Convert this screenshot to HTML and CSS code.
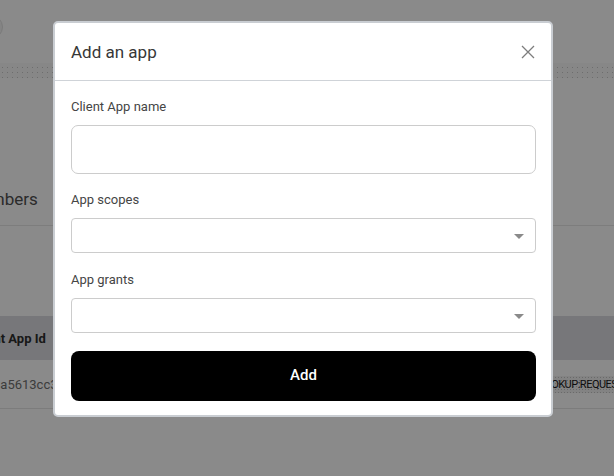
FILE: index.html
```html
<!DOCTYPE html>
<html>
<head>
<meta charset="utf-8">
<link rel="stylesheet" href="styles.css">
</head>
<body>
<div class="page">
  <div class="topbar"><span class="avatar"></span></div>
  <div class="dots"></div>
  <div class="tabs"><span class="tab">Members</span></div>
  <div class="table">
    <div class="thead"><span class="th">Client App Id</span></div>
    <div class="trow"><span class="td">3a5613cc3b1</span><span class="td-right">LOOKUP:REQUEST</span></div>
  </div>
</div>
<div class="overlay"></div>
<div class="modal">
  <div class="modal-header">
    <h2 class="modal-title">Add an app</h2>
    <svg class="close" width="14" height="14" viewBox="0 0 14 14"><path d="M1 1 L13 13 M13 1 L1 13" stroke="#7d7d7d" stroke-width="1.3" fill="none"/></svg>
  </div>
  <div class="modal-body">
    <div class="field">
      <div class="label">Client App name</div>
      <div class="input"></div>
    </div>
    <div class="field">
      <div class="label">App scopes</div>
      <div class="select"><span class="caret"></span></div>
    </div>
    <div class="field">
      <div class="label">App grants</div>
      <div class="select"><span class="caret"></span></div>
    </div>
    <button class="btn">Add</button>
  </div>
</div>
</body>
</html>
```
FILE: styles.css
```css
* { box-sizing: border-box; }
html, body { margin: 0; padding: 0; }
body {
  width: 614px;
  height: 476px;
  overflow: hidden;
  background: #ffffff;
  font-family: Roboto, "Liberation Sans", Arial, sans-serif;
}
.page {
  width: 614px;
  height: 476px;
  overflow: hidden;
}
.topbar {
  height: 63px;
  padding-top: 15px;
}
.avatar {
  display: block;
  width: 24px;
  height: 24px;
  margin-left: -21px;
  border-radius: 50%;
  background: #f4f4f4;
  border: 1px solid #e2e2e2;
}
.dots {
  height: 15px;
  background-color: #fafafa;
  background-image: radial-gradient(circle, #c9c9c9 0.7px, transparent 1px);
  background-size: 5px 5px;
  background-position: 0 2px;
}
.tabs {
  height: 148px;
  border-bottom: 1px solid #e8e8e8;
  padding-top: 111px;
  margin-left: -34px;
}
.tab {
  font-size: 17px;
  line-height: 20px;
  color: #505050;
}
.table { margin-top: 90px; }
.thead {
  height: 44px;
  background: #dcdce1;
  display: flex;
  align-items: center;
  margin-left: -29px;
}
.th {
  font-size: 13px;
  font-weight: 700;
  color: #2e2e2e;
}
.trow {
  height: 49px;
  border-bottom: 1px solid #e6e6e6;
  display: flex;
  align-items: center;
  margin-left: -7px;
  white-space: nowrap;
}
.td {
  flex: none;
  width: 546px;
  overflow: hidden;
  font-size: 13px;
  color: #707070;
}
.td-right {
  flex: none;
  font-size: 11px;
  letter-spacing: -0.5px;
  color: #1a1a1a;
  padding: 2px 0;
  background-color: #f2f2f2;
  background-image: radial-gradient(circle, #c4c4c4 0.6px, transparent 0.9px);
  background-size: 3px 3px;
}
.overlay {
  position: fixed;
  inset: 0;
  background: rgba(0, 0, 0, 0.46);
}
.modal {
  position: fixed;
  left: 53px;
  top: 21px;
  width: 500px;
  background: #ffffff;
  border: 2px solid #c9cdd2;
  border-radius: 5px;
}
.modal-header {
  display: flex;
  align-items: center;
  justify-content: space-between;
  padding: 17px 16px 16px 16px;
  border-bottom: 1px solid #cfd3d8;
}
.modal-title {
  margin: 0;
  font-size: 17px;
  line-height: 24px;
  font-weight: 400;
  color: #373737;
}
.close { margin-right: 0; }
.modal-body {
  padding: 18px 15px 14px 16px;
}
.field { margin-bottom: 18px; }
.field:nth-child(2) { margin-bottom: 19px; }
.label {
  font-size: 13px;
  line-height: 16px;
  color: #454545;
  margin-bottom: 10px;
}
.input {
  height: 49px;
  border: 1px solid #cccccc;
  border-radius: 7px;
}
.select {
  height: 35px;
  border: 1px solid #cccccc;
  border-radius: 4px;
  display: flex;
  align-items: center;
  justify-content: flex-end;
  padding-right: 11px;
}
.caret {
  width: 0;
  height: 0;
  border-left: 5px solid transparent;
  border-right: 5px solid transparent;
  border-top: 5px solid #8a8a8a;
  margin-top: 1px;
}
.btn {
  display: block;
  width: 100%;
  height: 50px;
  border: none;
  border-radius: 8px;
  background: #000000;
  color: #ffffff;
  font-family: Roboto, "Liberation Sans", Arial, sans-serif;
  font-size: 15px;
  font-weight: 500;
  padding: 0 0 2px 0;
}
```
